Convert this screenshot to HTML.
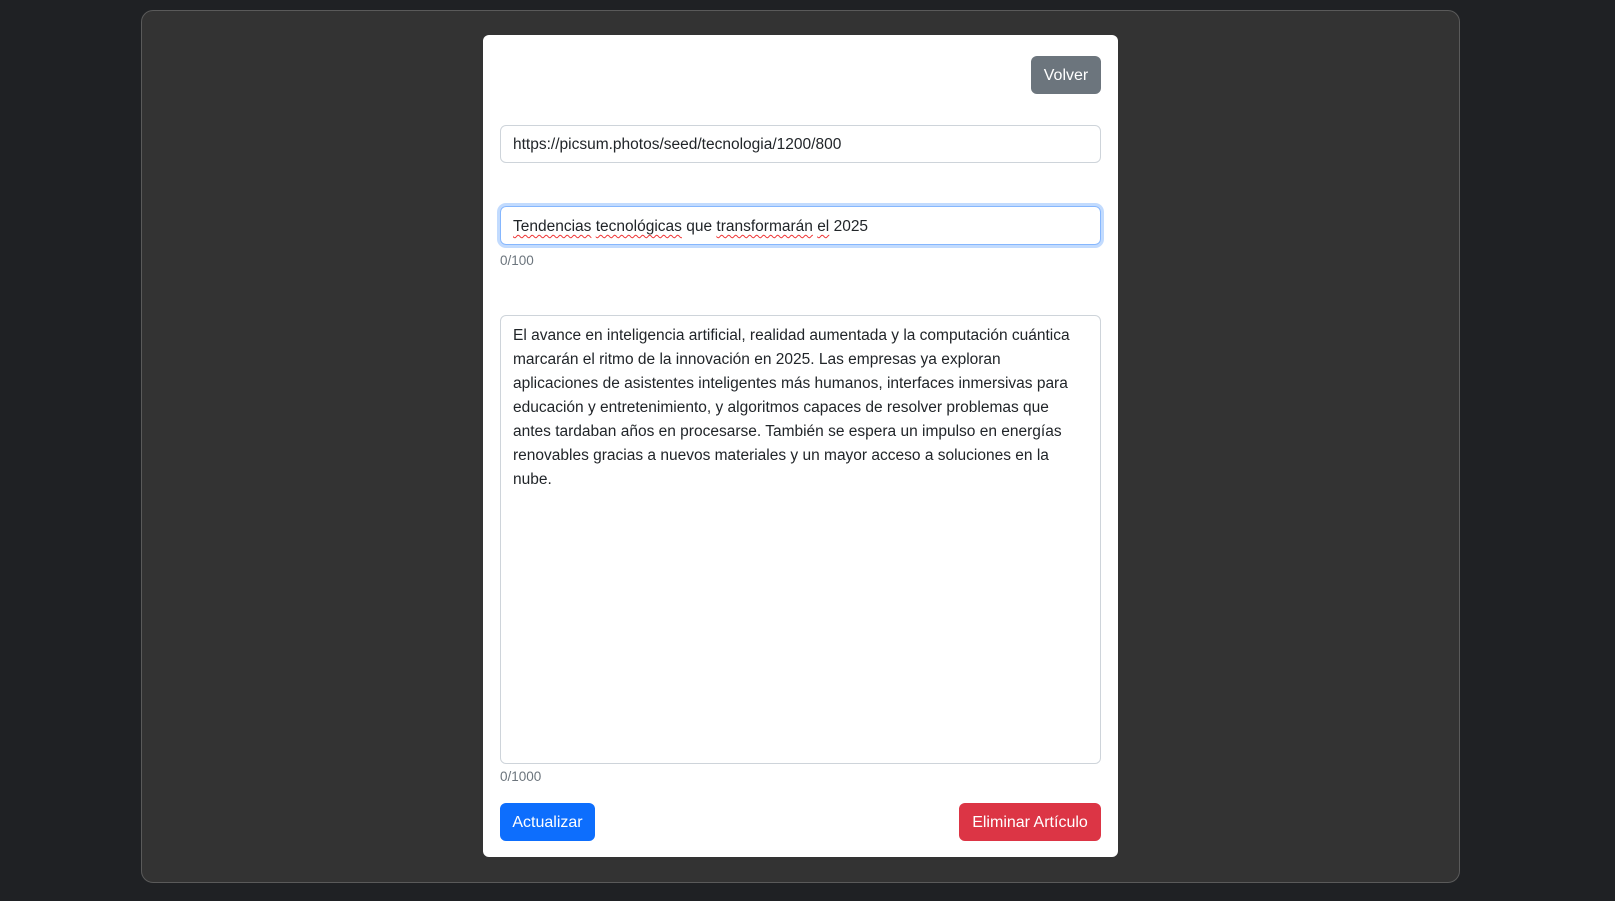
<!DOCTYPE html>
<html><head><meta charset="utf-8"><style>
*{box-sizing:border-box;margin:0;padding:0}
body{width:1615px;height:901px;background:#1f2124;font-family:"Liberation Sans",sans-serif;font-size:15.5px;color:#212529;position:relative;overflow:hidden}
.panel{position:absolute;left:141px;top:10px;width:1319px;height:873px;background:#333;border:1px solid #5a5a5a;border-radius:12px}
.card{position:absolute;left:483px;top:35px;width:635px;height:822px;background:#fff;border-radius:6px}
.in{position:absolute;left:17px;width:601px;border:1px solid #ced4da;border-radius:6px;padding:1px 12px 0;line-height:36px;height:38px;white-space:nowrap}
.btn{position:absolute;color:#fff;border-radius:6px;height:38px;line-height:39px;text-align:center;font-size:16px}
.small{position:absolute;left:17px;font-size:13.5px;color:#6c757d}
u{text-decoration:underline wavy #e33;text-underline-offset:3px;text-decoration-thickness:1px}
</style></head><body>
<div class="panel"></div>
<div class="card">
<div class="btn" style="left:548px;top:21px;width:70px;background:#6c757d">Volver</div>
<div class="in" style="top:90px">https://picsum.photos/seed/tecnologia/1200/800</div>
<div class="in" style="top:171px;height:39px;padding-top:2px;border:1px solid #86b7fe;box-shadow:0 0 0 3px rgba(13,110,253,.25)"><u>Tendencias</u> <u>tecnológicas</u> que <u>transformarán</u> <u>el</u> 2025</div>
<div class="small" style="top:218px">0/100</div>
<div class="in" style="top:280px;height:449px;white-space:normal;line-height:24px;padding:8px 12px">El avance en inteligencia artificial, realidad aumentada y la computación cuántica marcarán el ritmo de la innovación en 2025. Las empresas ya exploran aplicaciones de asistentes inteligentes más humanos, interfaces inmersivas para educación y entretenimiento, y algoritmos capaces de resolver problemas que antes tardaban años en procesarse. También se espera un impulso en energías renovables gracias a nuevos materiales y un mayor acceso a soluciones en la nube.</div>
<div class="small" style="top:734px">0/1000</div>
<div class="btn" style="left:17px;top:768px;width:95px;background:#0d6efd">Actualizar</div>
<div class="btn" style="left:476px;top:768px;width:142px;background:#dc3545">Eliminar Artículo</div>
</div>
</body></html>
